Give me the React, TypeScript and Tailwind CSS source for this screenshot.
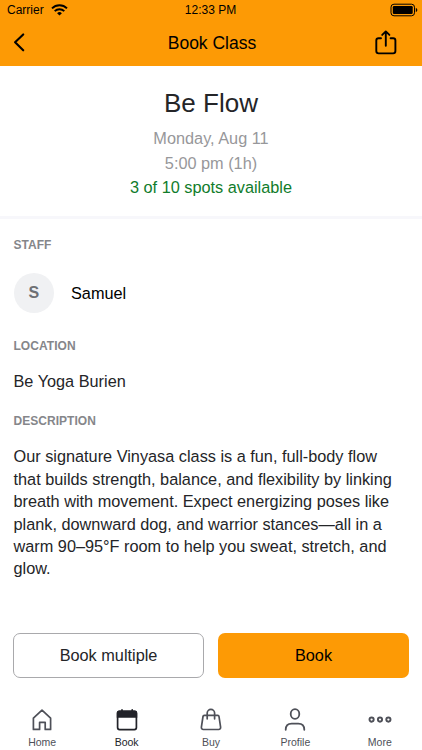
import type { ReactNode } from "react";
import { clsx } from "clsx";

const description = [
  "Our signature Vinyasa class is a fun, full-body flow",
  "that builds strength, balance, and flexibility by linking",
  "breath with movement. Expect energizing poses like",
  "plank, downward dog, and warrior stances—all in a",
  "warm 90–95°F room to help you sweat, stretch, and",
  "glow.",
];

function HomeIcon() {
  return (
    <svg width="24" height="24" viewBox="0 0 24 24" fill="none" stroke="currentColor" strokeWidth="1.7" strokeLinejoin="round">
      <path d="M3.4 10.2 12 2.2l8.6 8v11.2h-5.4v-7H9.6v7H3.4z" />
    </svg>
  );
}

function CalendarIcon() {
  return (
    <svg width="24" height="24" viewBox="0 0 24 24" fill="none" stroke="currentColor" strokeWidth="1.7" strokeLinecap="round">
      <rect x="2.6" y="3.4" width="18.8" height="18.2" rx="2" />
      <path d="M2.6 9V5c0-.9.6-1.600 1.500-1.600h15.800c.9 0 1.500.7 1.500 1.600v4z" fill="currentColor" />
      <path d="M7 1.900v2M17.200 1.900v2" />
    </svg>
  );
}

function BagIcon() {
  return (
    <svg width="24" height="24" viewBox="0 0 24 24" fill="none" stroke="currentColor" strokeWidth="1.7" strokeLinecap="round" strokeLinejoin="round">
      <path d="M5.3 7.400h13.400c.7 0 1.200.4 1.300 1.100l1.600 10.600c.2 1.400-.6 2.400-1.900 2.400H4.300c-1.300 0-2.100-1-1.900-2.400L4 8.500c.1-.7.6-1.100 1.300-1.100z" />
      <path d="M8.200 10.800V5.100a3.700 3.700 0 0 1 7.400 0v5.700" />
    </svg>
  );
}

function ProfileIcon() {
  return (
    <svg width="24" height="24" viewBox="0 0 24 24" fill="none" stroke="currentColor" strokeWidth="1.8" strokeLinecap="round">
      <ellipse cx="12" cy="6" rx="4.300" ry="4.800" />
      <path d="M2.700 21.800c0-3.900 2.400-6.200 6-6.200h6.600c3.600 0 6 2.300 6 6.200" />
    </svg>
  );
}

function MoreIcon() {
  return (
    <svg width="24" height="24" viewBox="0 0 24 24" fill="none" stroke="currentColor" strokeWidth="1.900">
      <circle cx="3.600" cy="11.600" r="2.100" />
      <circle cx="12" cy="11.600" r="2.100" />
      <circle cx="20.400" cy="11.600" r="2.100" />
    </svg>
  );
}

const tabs: { label: string; icon: ReactNode; active?: boolean }[] = [
  { label: "Home", icon: <HomeIcon /> },
  { label: "Book", icon: <CalendarIcon />, active: true },
  { label: "Buy", icon: <BagIcon /> },
  { label: "Profile", icon: <ProfileIcon /> },
  { label: "More", icon: <MoreIcon /> },
];

function SectionTitle({ children }: { children: ReactNode }) {
  return <h2 className="text-[12px] leading-4 font-bold tracking-[0.04px] text-[#85868a]">{children}</h2>;
}

export default function App() {
  return (
    <div className="flex h-[750px] w-[422px] flex-col overflow-hidden bg-white font-['Liberation_Sans',Arial,sans-serif] text-[#242528]">
      <header className="h-[66px] shrink-0 bg-[#fd9a05] text-black">
        <div className="grid h-5 grid-cols-[1fr_auto_1fr] items-center pr-1 pl-[7px] text-[12px] leading-5">
          <div className="flex items-center gap-[7px]">
            <span>Carrier</span>
            <svg width="17" height="12" viewBox="0 0 17 12" fill="none" stroke="currentColor" strokeWidth="1.900">
              <path d="M1 4.400a10.600 10.600 0 0 1 15 0" />
              <path d="M3.700 7.200a6.800 6.800 0 0 1 9.600 0" />
              <path d="M8.500 11.600 6.100 9.200a3.400 3.400 0 0 1 4.800 0z" fill="currentColor" stroke="none" />
            </svg>
          </div>
          <span className="pr-1 text-center leading-[18px]">12:33 PM</span>
          <svg className="justify-self-end" width="28" height="14" viewBox="0 0 28 14">
            <rect x="1" y="1.200" width="23.500" height="11.600" rx="3" fill="none" stroke="currentColor" />
            <rect x="2.800" y="3" width="19.900" height="8" rx="1.200" fill="currentColor" />
            <path d="M25.800 5v4c1-.4 1.500-1.100 1.500-2s-.5-1.600-1.500-2z" fill="currentColor" />
          </svg>
        </div>
        <div className="grid h-[46px] grid-cols-[62px_1fr_60px] items-center">
          <button className="pl-[13px]" aria-label="Back">
            <svg width="14" height="20" viewBox="0 0 14 20" fill="none" stroke="currentColor" strokeWidth="2.100" strokeLinecap="round" strokeLinejoin="round">
              <path d="M10.200 1.400 2.100 9.300l8.100 8" />
            </svg>
          </button>
          <h1 className="text-center text-[17.500px] leading-[46px]">Book Class</h1>
          <button aria-label="Share" className="pl-[12px]">
            <svg width="24" height="26" viewBox="0 0 24 26" fill="none" stroke="currentColor" strokeWidth="1.900" strokeLinecap="round" strokeLinejoin="round">
              <path d="M7 8.300H4.600c-1.500 0-2.300.8-2.300 2.200v10.600c0 1.500.8 2.300 2.300 2.300h14.500c1.500 0 2.300-.8 2.300-2.300V10.500c0-1.400-.8-2.200-2.300-2.200h-2.500" />
              <path d="M11.800 15.800V1.600M8.200 4.900l3.600-3.500 3.600 3.500" />
            </svg>
          </button>
        </div>
      </header>

      <section className="h-[153px] shrink-0 border-b-[3px] border-[#f7f7fb] pt-[22px] text-center text-[16.300px] leading-[24.400px]">
        <h2 className="mb-[8.300px] text-[26px] leading-[30px]">Be Flow</h2>
        <p className="text-[#97979a]">Monday, Aug 11</p>
        <p className="text-[#97979a]">5:00 pm (1h)</p>
        <p className="text-[#107c2b]">3 of 10 spots available</p>
      </section>

      <main className="flex grow flex-col px-[13.500px] pt-[18px] text-[16.300px] leading-[22.400px]">
        <SectionTitle>STAFF</SectionTitle>
        <div className="mt-[19.500px] flex items-center gap-[17px] text-black">
          <div className="flex size-[40.500px] items-center justify-center rounded-full bg-[#f0f1f3] text-[16px] font-bold text-[#6e7074]">S</div>
          <span>Samuel</span>
        </div>
        <div className="mt-[25px]">
          <SectionTitle>LOCATION</SectionTitle>
        </div>
        <p className="mt-[16px]">Be Yoga Burien</p>
        <div className="mt-[21px]">
          <SectionTitle>DESCRIPTION</SectionTitle>
        </div>
        <p className="mt-[16px] whitespace-nowrap">
          {description.map((line) => (
            <span key={line} className="block">{line}</span>
          ))}
        </p>
      </main>

      <div className="grid h-[45px] shrink-0 grid-cols-2 gap-[14px] px-[13px] text-[16.300px]">
        <button className="rounded-[7px] border border-[#a9a9ac]">Book multiple</button>
        <button className="rounded-[7px] bg-[#fd9a05] text-black">Book</button>
      </div>

      <nav className="mt-[30px] grid h-[42px] shrink-0 grid-cols-5 text-[10.500px] leading-3 text-[#4e5058]">
        {tabs.map((tab) => (
          <div key={tab.label} className={clsx("flex flex-col items-center gap-[4px]", tab.active && "text-[#222329]")}>
            {tab.icon}
            <span>{tab.label}</span>
          </div>
        ))}
      </nav>
    </div>
  );
}
